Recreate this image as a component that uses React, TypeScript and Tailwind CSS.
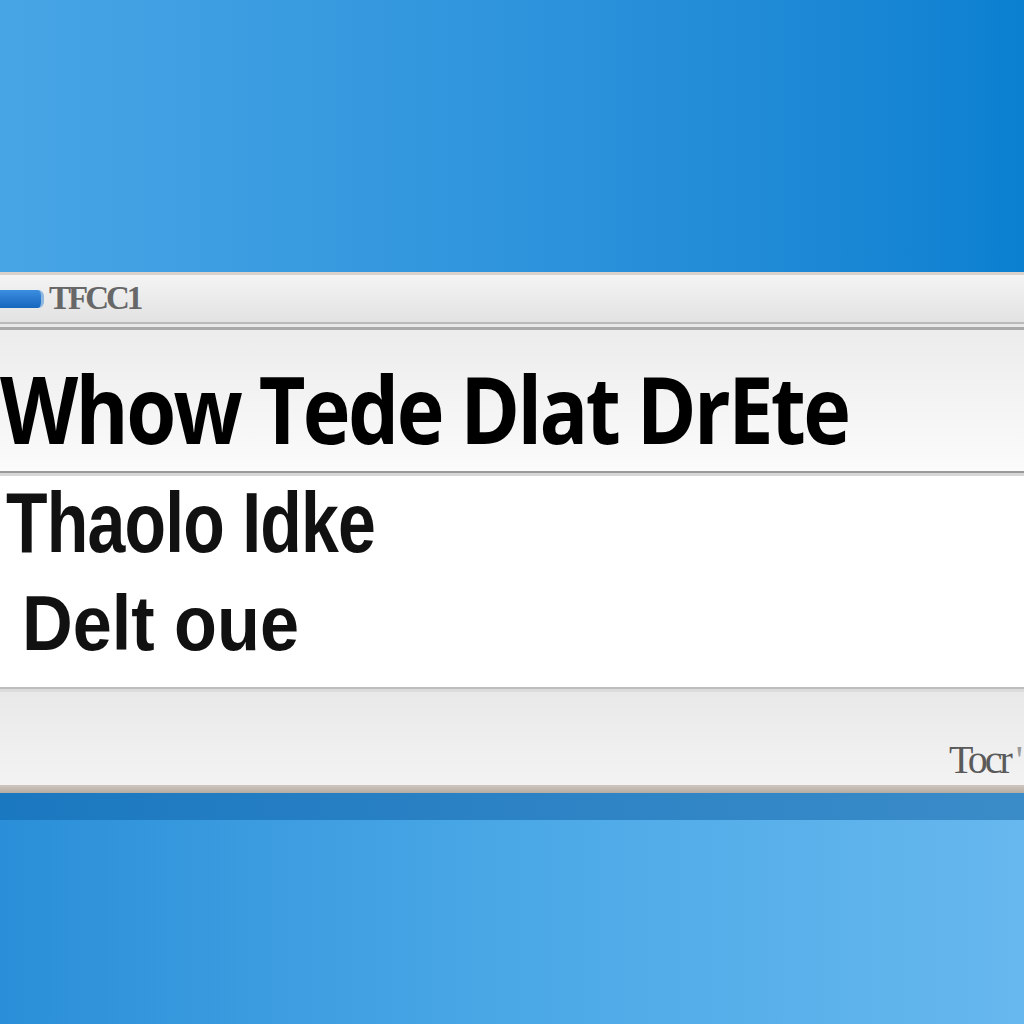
import React from "react";

export default function App() {
  return (
    <div className="w-[1024px] h-[1024px] overflow-hidden flex flex-col bg-[#3a9ce0]">
      {/* top desktop */}
      <div className="h-[272px] shrink-0 bg-gradient-to-r from-[#47a5e5] via-[#2e94dc] to-[#0a80d0]" />
      {/* window */}
      <div className="shrink-0 flex flex-col bg-[#efefef]">
        {/* title bar */}
        <div className="h-[50px] flex items-center border-t-[3px] border-[#d9d2cc] bg-gradient-to-b from-[#f4f4f4] to-[#e2e2e2]">
          <div className="w-[44px] h-[18px] rounded-r-[6px] bg-gradient-to-b from-[#3b8ee0] to-[#1566be] border-r-[3px] border-[#8fb8e0]" />
          <span className="ml-[5px] text-[33px] leading-none text-[#676767] tracking-[-3px] font-['Liberation_Serif',serif] font-bold">
            TFCC1
          </span>
        </div>
        <div className="h-[2px] bg-[#b9b9b9]" />
        <div className="h-[3px] bg-[#e8e8e8]" />
        <div className="h-[3px] bg-[#a9a9a9]" />
        {/* row 1 */}
        <div className="h-[141px] flex items-center bg-gradient-to-b from-[#ececec] to-[#fbfbfb]">
          <span className="pt-[14px] text-[94px] leading-none text-black font-['Open_Sans',sans-serif] font-bold tracking-[-3px] whitespace-nowrap origin-left scale-x-[0.86] inline-block">
            Whow Tede Dlat DrEte
          </span>
        </div>
        <div className="h-[2px] bg-[#9a9a9a]" />
        <div className="h-[3px] bg-[#d6d6d6]" />
        {/* row 2 */}
        <div className="h-[211px] bg-white flex flex-col items-start pl-[6px] font-['Liberation_Sans',sans-serif] text-[#111]">
          <span className="inline-block origin-left scale-x-[0.8] -mt-[3px] text-[85px] leading-[100px] font-bold tracking-[-1px] whitespace-nowrap">
            Thaolo Idke
          </span>
          <span className="inline-block origin-left scale-x-[0.9] ml-[16px] text-[78px] leading-[100px] font-bold whitespace-nowrap">
            Delt oue
          </span>
        </div>
        <div className="h-[2px] bg-[#bdbdbd]" />
        <div className="h-[3px] bg-[#dcdcdc]" />
        {/* bottom bar */}
        <div className="h-[93px] flex items-end justify-end pb-[5px] pr-[4px] bg-gradient-to-b from-[#e9e9e9] to-[#f3f3f3]">
          <span className="text-[40px] leading-none text-[#5a5a5a] tracking-[-3px] font-['Liberation_Serif',serif] whitespace-nowrap">
            Tocr<span className="ml-[6px] text-[#9a9a9a]">'</span>
          </span>
        </div>
        <div className="h-[8px] bg-gradient-to-b from-[#d0c8c0] to-[#b5aca4]" />
      </div>
      {/* bottom desktop */}
      <div className="h-[27px] shrink-0 bg-gradient-to-r from-[#1a78c0] to-[#3a8cc8]" />
      <div className="flex-1 bg-gradient-to-r from-[#2a8fd8] via-[#4aa8e6] to-[#66b8ee]" />
    </div>
  );
}
